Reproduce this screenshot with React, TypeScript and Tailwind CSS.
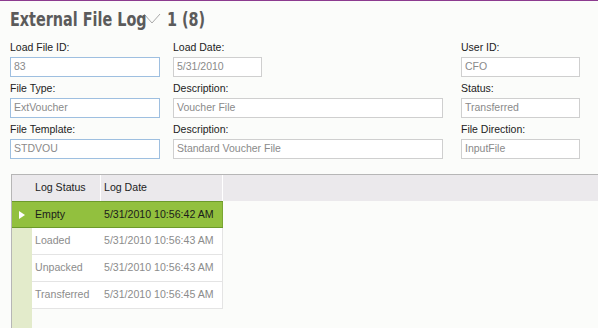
import React from "react";

const fields = [
  [
    { label: "Load File ID:", value: "83", w: "w-[150px]", active: true },
    { label: "Load Date:", value: "5/31/2010", w: "w-[89px]", active: false },
    { label: "User ID:", value: "CFO", w: "w-[119px]", active: false },
  ],
  [
    { label: "File Type:", value: "ExtVoucher", w: "w-[150px]", active: true },
    { label: "Description:", value: "Voucher File", w: "w-[270px]", active: false },
    { label: "Status:", value: "Transferred", w: "w-[119px]", active: false },
  ],
  [
    { label: "File Template:", value: "STDVOU", w: "w-[150px]", active: true },
    { label: "Description:", value: "Standard Voucher File", w: "w-[270px]", active: false },
    { label: "File Direction:", value: "InputFile", w: "w-[119px]", active: false },
  ],
];

const logs = [
  { status: "Empty", date: "5/31/2010 10:56:42 AM" },
  { status: "Loaded", date: "5/31/2010 10:56:43 AM" },
  { status: "Unpacked", date: "5/31/2010 10:56:43 AM" },
  { status: "Transferred", date: "5/31/2010 10:56:45 AM" },
];

const colWidths = ["w-[163px]", "w-[288px]", "w-[119px]"];

export default function App() {
  return (
    <div className="w-[598px] h-[328px] overflow-hidden flex flex-col bg-[#fbfcfa] border-t border-[#8c3b8f] font-['Liberation_Sans',Arial,sans-serif]">
      {/* title */}
      <div className="h-[35px] pt-[6px] pl-[10px] flex items-start font-['DejaVu_Sans_Condensed','DejaVu_Sans',sans-serif] text-[20px] leading-[24px] font-bold text-[#5b5b5b]">
        <span className="w-[130px] inline-block whitespace-nowrap origin-left scale-x-[0.8]">External File Log</span>
        <svg width="18" height="12" viewBox="0 0 18 12" className="ml-[3px] mt-[6px]">
          <polyline points="1,1 9,10 17,1" fill="none" stroke="#a9a9a9" strokeWidth="1" />
        </svg>
        <span className="ml-[6px] w-[40px] inline-block whitespace-nowrap origin-left scale-x-[0.8]">1 (8)</span>
      </div>

      {/* form */}
      <div className="pl-[10px] flex flex-col">
        {fields.map((row, i) => (
          <div key={i} className="flex">
            {row.map((f, j) => (
              <div key={j} className={colWidths[j]}>
                <div className="h-[21px] pt-[4px] text-[10.5px] leading-[14px] text-[#222]">{f.label}</div>
                <div
                  className={`${f.w} h-[20px] pl-[3px] flex items-center text-[10.5px] text-[#8a8a8a] bg-white border ${
                    f.active ? "border-[#9ebfe0]" : "border-[#cfcfcf]"
                  }`}
                >
                  {f.value}
                </div>
              </div>
            ))}
          </div>
        ))}
      </div>

      {/* grid */}
      <div className="mt-[15px] ml-[11px] flex-1 flex flex-col border-t border-l border-[#b6b6b6] text-[10.6px]">
        <div className="h-[26px] flex bg-[#ebe9ec] text-[#222]">
          <div className="w-[20px]" />
          <div className="w-[69px] border-r border-white pl-[3px] flex items-center">Log Status</div>
          <div className="w-[122px] border-r border-white pl-[3px] flex items-center">Log Date</div>
        </div>
        {logs.map((l, i) =>
          i === 0 ? (
            <div key={i} className="w-[211px] h-[27px] flex bg-[#92c03e] border-y border-[#6c9a2a] text-[#1b1b1b]">
              <div className="w-[20px] flex items-center pl-[7px]">
                <svg width="6" height="8" viewBox="0 0 6 8">
                  <polygon points="0,0 6,4 0,8" fill="#ffffff" />
                </svg>
              </div>
              <div className="w-[69px] pl-[3px] flex items-center">{l.status}</div>
              <div className="w-[122px] pl-[3px] flex items-center border-r border-[#7aa632]">{l.date}</div>
            </div>
          ) : (
            <div key={i} className="w-[211px] h-[27px] flex text-[#8c8c8c]">
              <div className="w-[20px] bg-[#e3ebcb]" />
              <div className="w-[69px] pl-[3px] flex items-center border-b border-[#e4e4e4] bg-white">{l.status}</div>
              <div className="w-[122px] pl-[3px] flex items-center border-b border-r border-[#e4e4e4] bg-white">
                {l.date}
              </div>
            </div>
          )
        )}
        <div className="flex-1 w-[20px] bg-[#e3ebcb]" />
      </div>
    </div>
  );
}
